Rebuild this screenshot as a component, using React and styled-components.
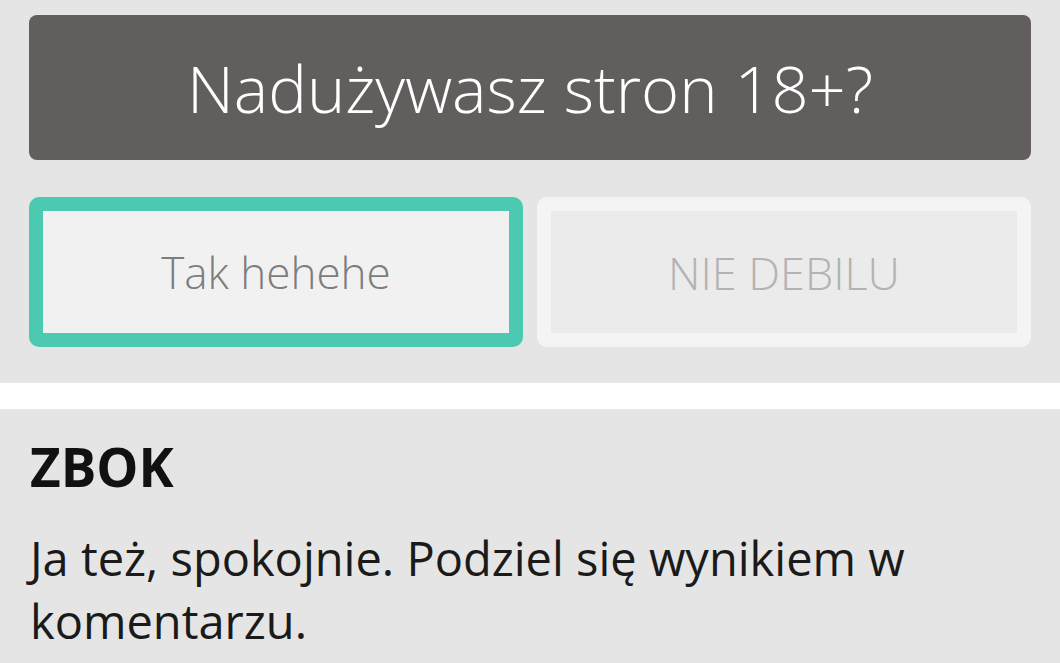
import React from "react";
import styled, { createGlobalStyle } from "styled-components";

const Global = createGlobalStyle`
  html, body {
    margin: 0;
    padding: 0;
    background: #e5e5e5;
    font-family: "Open Sans", "Liberation Sans", sans-serif;
  }
`;

const Page = styled.div`
  width: 1060px;
  height: 663px;
  overflow: hidden;
  background: #e5e5e5;
  display: flex;
  flex-direction: column;
`;

const Quiz = styled.section`
  padding: 15px 29px 36px 29px;
  display: flex;
  flex-direction: column;
  gap: 37px;
`;

const Question = styled.div`
  height: 145px;
  border-radius: 8px;
  background: #625e5d;
  color: #ffffff;
  display: flex;
  align-items: center;
  justify-content: center;
  font-size: 65px;
  font-weight: 300;
`;

const Answers = styled.div`
  display: grid;
  grid-template-columns: 1fr 1fr;
  gap: 14px;
`;

const Answer = styled.button`
  height: 150px;
  box-sizing: border-box;
  margin: 0;
  border: 14px solid ${(p) => (p.$selected ? "#4bc9b1" : "#f4f4f4")};
  border-radius: 10px;
  background: ${(p) => (p.$selected ? "#f1f1f1" : "#ebebeb")};
  background-clip: padding-box;
  color: ${(p) => (p.$selected ? "#7d7d7d" : "#b3b3b3")};
  font-family: "Open Sans", "Liberation Sans", sans-serif;
  font-size: ${(p) => (p.$selected ? "44px" : "45px")};
  font-weight: 300;
  display: flex;
  align-items: center;
  justify-content: center;
  padding: 0;
`;

const Divider = styled.div`
  height: 26px;
  background: #ffffff;
`;

const Result = styled.section`
  padding: 28px 30px 0 30px;
`;

const ResultTitle = styled.h2`
  margin: 0;
  font-size: 53px;
  line-height: 60px;
  font-weight: 700;
  color: #111111;
`;

const ResultText = styled.p`
  margin: 30px 0 0 0;
  font-size: 47px;
  line-height: 63px;
  font-weight: 400;
  color: #1a1a1a;
  max-width: 1000px;
`;

export default function App() {
  return (
    <Page>
      <Global />
      <Quiz>
        <Question>Nadużywasz stron 18+?</Question>
        <Answers>
          <Answer $selected>Tak hehehe</Answer>
          <Answer>NIE DEBILU</Answer>
        </Answers>
      </Quiz>
      <Divider />
      <Result>
        <ResultTitle>ZBOK</ResultTitle>
        <ResultText>Ja też, spokojnie. Podziel się wynikiem w komentarzu.</ResultText>
      </Result>
    </Page>
  );
}
